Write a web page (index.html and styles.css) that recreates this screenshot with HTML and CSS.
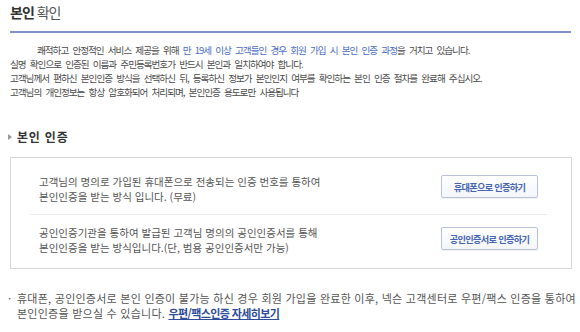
FILE: index.html
```html
<!DOCTYPE html>
<html lang="ko">
<head>
<meta charset="utf-8">
<link rel="stylesheet" href="styles.css">
</head>
<body>
<div class="page">
  <h1 class="title"><b>본인</b> 확인</h1>
  <div class="intro">
    <p class="first">쾌적하고 안정적인 서비스 제공을 위해 <span class="hl">만 19세 이상 고객들인 경우 회원 가입 시 본인 인증 과정</span>을 거치고 있습니다.</p>
    <p>실명 확인으로 인증된 이름과 주민등록번호가 반드시 본인과 일치하여야 합니다.</p>
    <p>고객님께서 편하신 본인인증 방식을 선택하신 뒤, 등록하신 정보가 본인인지 여부를 확인하는 본인 인증 절차를 완료해 주십시오.</p>
    <p>고객님의 개인정보는 항상 암호화되어 처리되며, 본인인증 용도로만 사용됩니다</p>
  </div>
  <h2 class="section"><span class="arrow"></span>본인 인증</h2>
  <div class="box">
    <div class="row row1">
      <p class="desc">고객님의 명의로 가입된 휴대폰으로 전송되는 인증 번호를 통하여<br>본인인증을 받는 방식 입니다. (무료)</p>
      <button class="btn">휴대폰으로 인증하기</button>
    </div>
    <div class="row row2">
      <p class="desc">공인인증기관을 통하여 발급된 고객님 명의의 공인인증서를 통해<br>본인인증을 받는 방식입니다.(단, 범용 공인인증서만 가능)</p>
      <button class="btn">공인인증서로 인증하기</button>
    </div>
  </div>
  <div class="note">
    <span class="dot">·</span>
    <p>휴대폰, 공인인증서로 본인 인증이 불가능 하신 경우 회원 가입을 완료한 이후, 넥슨 고객센터로 우편/팩스 인증을 통하여<br>본인인증을 받으실 수 있습니다. <a class="link" href="#">우편/팩스인증 자세히보기</a></p>
  </div>
</div>
</body>
</html>
```
FILE: styles.css
```css
* { box-sizing: border-box; }
body {
  margin: 0;
  background: #fff;
  font-family: "Noto Sans CJK KR", "Noto Sans", sans-serif;
  color: #555;
}
.page {
  padding: 0 9px 0 10px;
  width: 580px;
}
.title {
  margin: 0;
  padding: 3px 0 9px;
  font-size: 14px;
  line-height: 19px;
  font-weight: normal;
  letter-spacing: -1px;
  color: #555;
  border-bottom: 2px solid #7d92cb;
}
.title b { color: #333; font-weight: bold; }
.intro {
  margin-top: 10px;
  font-size: 9.6px;
  line-height: 14px;
  letter-spacing: -1.02px;
  word-spacing: 2.5px;
  color: #4a4a4a;
}
.intro p { margin: 0; white-space: nowrap; }
.intro .first { padding-left: 27px; }
.hl { color: #4a6cc4; }
.section {
  margin: 30px 0 0;
  display: flex;
  align-items: center;
  font-size: 12px;
  line-height: 16px;
  letter-spacing: 0.8px;
  font-weight: bold;
  color: #333;
}
.arrow {
  width: 0;
  height: 0;
  border-left: 4px solid #999;
  border-top: 3px solid transparent;
  border-bottom: 3px solid transparent;
  margin: 0 5px 0 -2px;
}
.box {
  margin-top: 12px;
  width: 562px;
  border: 1px solid #d6d6d6;
  padding: 0 24px 0 19px;
}
.row {
  display: flex;
  justify-content: space-between;
  align-items: flex-start;
}
.row1 {
  padding: 16px 9px 10px 9px;
  border-bottom: 1px solid #ececec;
}
.row2 {
  padding: 10px 9px 13px 9px;
}
.desc {
  margin: 0;
  font-size: 10.5px;
  line-height: 15px;
  color: #555;
  white-space: nowrap;
}
.btn {
  width: 97px;
  height: 23px;
  margin-top: 1px;
  padding: 0;
  border: 1px solid #b9c2d9;
  border-radius: 2px;
  background: linear-gradient(#ffffff, #f3f5fa);
  box-shadow: 0 1px 1px rgba(0,0,0,0.06);
  font-family: "Noto Sans CJK KR", sans-serif;
  font-size: 9.2px;
  font-weight: bold;
  letter-spacing: -0.7px;
  color: #4464b0;
}
.row2 .btn { margin-top: 2px; }
.note {
  margin-top: 22px;
  display: flex;
  font-size: 11px;
  line-height: 15px;
  color: #555;
  letter-spacing: 0.25px;
}
.note .dot { width: 9px; margin-left: -2px; flex: none; }
.note p { margin: 0; white-space: nowrap; }
.link {
  color: #2d4c9c;
  font-weight: bold;
  letter-spacing: -0.6px;
  text-decoration: underline;
}
```
